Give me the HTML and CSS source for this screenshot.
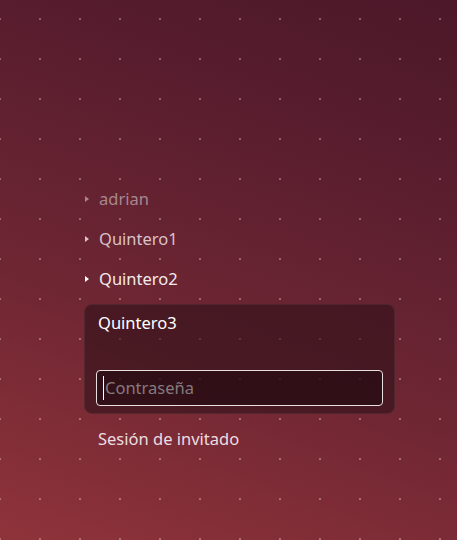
FILE: index.html
```html
<!DOCTYPE html>
<html lang="es">
<head>
<meta charset="utf-8">
<title>Login</title>
<link rel="stylesheet" href="styles.css">
</head>
<body>
<div class="screen">
  <div class="greeter">
    <div class="user user-dim"><span class="arrow"></span><span class="name">adrian</span></div>
    <div class="user user-mid"><span class="arrow"></span><span class="name">Quintero1</span></div>
    <div class="user user-bright"><span class="arrow"></span><span class="name">Quintero2</span></div>
    <div class="card">
      <div class="card-name">Quintero3</div>
      <div class="password">
        <span class="caret"></span><span class="placeholder">Contraseña</span>
      </div>
    </div>
    <div class="guest">Sesión de invitado</div>
  </div>
</div>
</body>
</html>
```
FILE: styles.css
```css
html, body {
  margin: 0;
  padding: 0;
  width: 457px;
  height: 540px;
  overflow: hidden;
}
.screen {
  width: 457px;
  height: 540px;
  font-family: "Noto Sans", "Open Sans", sans-serif;
  font-size: 16.5px;
  background-image:
    radial-gradient(circle at 1px 1px, rgba(255,255,255,0.3) 1.4px, transparent 1.5px),
    linear-gradient(20deg, #8f333a 0%, #6e2633 40%, #581d2e 75%, #4c1829 100%);
  background-size: 40px 40px, 100% 100%;
  background-position: -1px 18px, 0 0;
}
.greeter {
  padding: 179px 0 0 84px;
  width: 311px;
}
.user {
  height: 40px;
  display: flex;
  align-items: center;
}
.arrow {
  width: 0;
  height: 0;
  border-top: 3.5px solid transparent;
  border-bottom: 3.5px solid transparent;
  border-left: 4px solid currentColor;
  margin: 0 10px 0 1px;
}
.name {
  line-height: 20px;
}
.user-dim { color: #a7878f; }
.user-mid { color: #d9c2c9; }
.user-bright { color: #f4eaec; }
.user-bright .arrow { color: #ffffff; }
.card {
  margin-top: 5px;
  height: 110px;
  box-sizing: border-box;
  border-radius: 8px;
  background: rgba(40, 14, 22, 0.55);
  border: 1px solid rgba(255, 255, 255, 0.06);
  padding: 8px 11px 0 11px;
  display: flex;
  flex-direction: column;
}
.card-name {
  color: #ffffff;
  line-height: 20px;
  padding-left: 2px;
}
.password {
  margin-top: 37px;
  height: 36px;
  box-sizing: border-box;
  border: 1px solid #e8dfe1;
  border-radius: 4px;
  background: rgba(30, 8, 14, 0.55);
  display: flex;
  align-items: center;
  padding-left: 6px;
}
.caret {
  width: 1px;
  height: 24px;
  background: #ffffff;
  margin-right: 1px;
}
.placeholder {
  color: #857a7c;
  line-height: 20px;
}
.guest {
  margin-top: 15px;
  padding-left: 14px;
  color: #ecdde1;
  line-height: 20px;
}
```
